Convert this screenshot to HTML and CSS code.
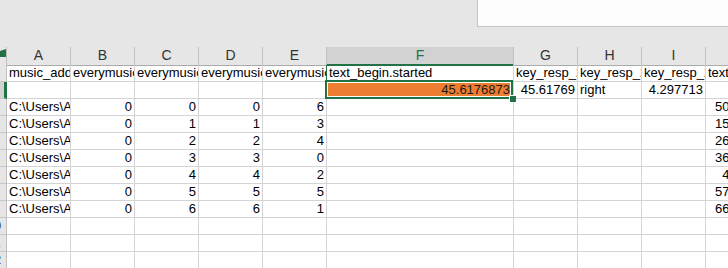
FILE: index.html
```html
<!DOCTYPE html>
<html lang="zh-CN">

<head>
    <meta charset="UTF-8">
    <meta name="viewport" content="width=device-width, initial-scale=1.0">
    <title>data.csv</title>
    <link rel="stylesheet" href="styles.css">
</head>

<body>
    <!-- 上部のツールバー部分 -->
    <div class="topbar">
        <div class="formula-box"></div>
    </div>

    <div class="sheet">
        <!-- 列見出し -->
        <div class="row head">
            <div class="rh corner"><span class="tri"></span></div>
            <div class="ch">A</div>
            <div class="ch">B</div>
            <div class="ch">C</div>
            <div class="ch">D</div>
            <div class="ch">E</div>
            <div class="ch sel">F</div>
            <div class="ch">G</div>
            <div class="ch">H</div>
            <div class="ch">I</div>
            <div class="ch">J</div>
        </div>

        <div class="row">
            <div class="rh"><span>1</span></div>
            <div class="c">music_address</div>
            <div class="c">everymusic_1</div>
            <div class="c">everymusic_2</div>
            <div class="c">everymusic_3</div>
            <div class="c">everymusic_4</div>
            <div class="c mark">text_begin.started</div>
            <div class="c">key_resp_2.started</div>
            <div class="c">key_resp_2.keys</div>
            <div class="c">key_resp_2.rt</div>
            <div class="c">text_2.started</div>
        </div>

        <div class="row">
            <div class="rh active"><span>2</span></div>
            <div class="c"></div>
            <div class="c"></div>
            <div class="c"></div>
            <div class="c"></div>
            <div class="c"></div>
            <div class="c cur">
                <div class="selbox">
                    <div class="fill">45.6176873</div>
                    <span class="handle"></span>
                </div>
            </div>
            <div class="c num">45.61769</div>
            <div class="c">right</div>
            <div class="c num">4.297713</div>
            <div class="c"></div>
        </div>

        <div class="row">
            <div class="rh"><span>3</span></div>
            <div class="c">C:\Users\Administrator\Desktop\music\1.wav</div>
            <div class="c num">0</div>
            <div class="c num">0</div>
            <div class="c num">0</div>
            <div class="c num">6</div>
            <div class="c"></div>
            <div class="c"></div>
            <div class="c"></div>
            <div class="c"></div>
            <div class="c num">50.20134475</div>
        </div>

        <div class="row">
            <div class="rh"><span>4</span></div>
            <div class="c">C:\Users\Administrator\Desktop\music\2.wav</div>
            <div class="c num">0</div>
            <div class="c num">1</div>
            <div class="c num">1</div>
            <div class="c num">3</div>
            <div class="c"></div>
            <div class="c"></div>
            <div class="c"></div>
            <div class="c"></div>
            <div class="c num">15.63319852</div>
        </div>

        <div class="row">
            <div class="rh"><span>5</span></div>
            <div class="c">C:\Users\Administrator\Desktop\music\3.wav</div>
            <div class="c num">0</div>
            <div class="c num">2</div>
            <div class="c num">2</div>
            <div class="c num">4</div>
            <div class="c"></div>
            <div class="c"></div>
            <div class="c"></div>
            <div class="c"></div>
            <div class="c num">26.81440963</div>
        </div>

        <div class="row">
            <div class="rh"><span>6</span></div>
            <div class="c">C:\Users\Administrator\Desktop\music\4.wav</div>
            <div class="c num">0</div>
            <div class="c num">3</div>
            <div class="c num">3</div>
            <div class="c num">0</div>
            <div class="c"></div>
            <div class="c"></div>
            <div class="c"></div>
            <div class="c"></div>
            <div class="c num">36.17552208</div>
        </div>

        <div class="row">
            <div class="rh"><span>7</span></div>
            <div class="c">C:\Users\Administrator\Desktop\music\5.wav</div>
            <div class="c num">0</div>
            <div class="c num">4</div>
            <div class="c num">4</div>
            <div class="c num">2</div>
            <div class="c"></div>
            <div class="c"></div>
            <div class="c"></div>
            <div class="c"></div>
            <div class="c num">4.12760341</div>
        </div>

        <div class="row">
            <div class="rh"><span>8</span></div>
            <div class="c">C:\Users\Administrator\Desktop\music\6.wav</div>
            <div class="c num">0</div>
            <div class="c num">5</div>
            <div class="c num">5</div>
            <div class="c num">5</div>
            <div class="c"></div>
            <div class="c"></div>
            <div class="c"></div>
            <div class="c"></div>
            <div class="c num">57.08823146</div>
        </div>

        <div class="row">
            <div class="rh"><span>9</span></div>
            <div class="c">C:\Users\Administrator\Desktop\music\7.wav</div>
            <div class="c num">0</div>
            <div class="c num">6</div>
            <div class="c num">6</div>
            <div class="c num">1</div>
            <div class="c"></div>
            <div class="c"></div>
            <div class="c"></div>
            <div class="c"></div>
            <div class="c num">66.45917730</div>
        </div>

        <!-- 空の行 -->
        <div class="row">
            <div class="rh"><span>10</span></div>
            <div class="c"></div><div class="c"></div><div class="c"></div><div class="c"></div><div class="c"></div>
            <div class="c"></div><div class="c"></div><div class="c"></div><div class="c"></div><div class="c"></div>
        </div>
        <div class="row">
            <div class="rh"><span>11</span></div>
            <div class="c"></div><div class="c"></div><div class="c"></div><div class="c"></div><div class="c"></div>
            <div class="c"></div><div class="c"></div><div class="c"></div><div class="c"></div><div class="c"></div>
        </div>
        <div class="row">
            <div class="rh"><span>12</span></div>
            <div class="c"></div><div class="c"></div><div class="c"></div><div class="c"></div><div class="c"></div>
            <div class="c"></div><div class="c"></div><div class="c"></div><div class="c"></div><div class="c"></div>
        </div>
    </div>
</body>

</html>
```

FILE: styles.css
```css
body {
    margin: 0;
    overflow: hidden;
    background: #ffffff;
    font-family: "Liberation Sans", Arial, "Noto Sans CJK SC", sans-serif;
    font-size: 13px;
    color: #000000;
}

/* 上部の灰色の部分 */
.topbar {
    height: 47px;
    background: #e6e6e6;
    display: flex;
    justify-content: flex-end;
}

.formula-box {
    width: 251px;
    height: 27px;
    box-sizing: border-box;
    background: #fdfdfd;
    border-left: 1px solid #c6c6c6;
    border-bottom: 1px solid #c6c6c6;
}

.sheet {
    width: max-content;
}

.row {
    display: grid;
    grid-template-columns: 7px repeat(5, 64px) 187px repeat(3, 64px) 88px;
    height: 17px;
}

.row.head {
    height: 18px;
}

/* 行見出し */
.rh {
    box-sizing: border-box;
    background: #e6e6e6;
    border-right: 1px solid #c0c0c0;
    border-bottom: 1px solid #c6c6c6;
    overflow: hidden;
    color: #444444;
    line-height: 16px;
}

.rh span {
    display: block;
    width: 26px;
    margin-left: -19px;
    text-align: center;
}

.rh.active {
    background: #d2d2d2;
    border-right: 3px solid #217346;
}

.rh.corner {
    border-bottom: 1px solid #ababab;
    display: flex;
    align-items: flex-start;
}

.tri {
    width: 3px;
    height: 8px;
    margin-top: 2px;
    background: #217346;
    clip-path: polygon(100% 0, 100% 100%, 0 100%);
}

/* 列見出し */
.ch {
    box-sizing: border-box;
    background: #e6e6e6;
    border-right: 1px solid #c0c0c0;
    border-bottom: 1px solid #ababab;
    text-align: center;
    line-height: 17px;
    color: #333333;
    font-size: 14px;
}

.ch.sel {
    background: #d2d2d2;
    color: #217346;
    border-bottom: 2px solid #217346;
}

/* セル */
.c {
    box-sizing: border-box;
    border-right: 1px solid #d4d4d4;
    border-bottom: 1px solid #d4d4d4;
    padding: 0 2px;
    line-height: 16px;
    white-space: nowrap;
    overflow: hidden;
}

.c.num {
    text-align: right;
}

.c.mark {
    border-left: 1px solid #217346;
    margin-left: -1px;
}

.c.cur {
    position: relative;
    overflow: visible;
}

/* 選択中のセル */
.selbox {
    position: absolute;
    left: -2px;
    top: -2px;
    width: 188px;
    height: 19px;
    box-sizing: border-box;
    border: 2px solid #217346;
    padding: 1px;
    background: #ffffff;
    z-index: 2;
}

.fill {
    height: 100%;
    background: #ed7d31;
    text-align: right;
    line-height: 13px;
    overflow: hidden;
    white-space: nowrap;
    color: #1a1a1a;
}

.handle {
    position: absolute;
    right: -5px;
    bottom: -5px;
    width: 6px;
    height: 6px;
    background: #217346;
    border: 1px solid #ffffff;
    border-right: 0;
    border-bottom: 0;
}
```
